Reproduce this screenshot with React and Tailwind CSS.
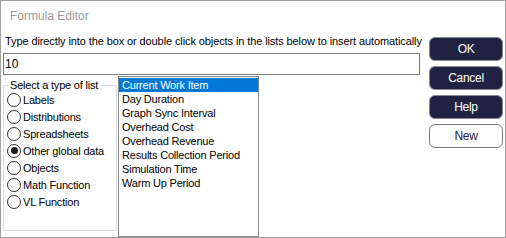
import React from "react";

const listTypes = [
    "Labels",
    "Distributions",
    "Spreadsheets",
    "Other global data",
    "Objects",
    "Math Function",
    "VL Function",
];

const items = [
    "Current Work Item",
    "Day Duration",
    "Graph Sync Interval",
    "Overhead Cost",
    "Overhead Revenue",
    "Results Collection Period",
    "Simulation Time",
    "Warm Up Period",
];

function Radio({ label, checked }) {
    return (
        <div className="flex items-center h-[17px]">
            <span className="w-[14px] h-[14px] rounded-full border border-[#333333] bg-white flex items-center justify-center">
                {checked && <span className="w-[7px] h-[7px] rounded-full bg-[#1a1a1a]" />}
            </span>
            <span className="ml-[2px] leading-[14px]">{label}</span>
        </div>
    );
}

export default function App() {
    return (
        <div
            className="w-[506px] h-[238px] bg-white border border-[#a0a0a0] overflow-hidden text-[11px] tracking-[-0.2px] text-black"
            style={{ fontFamily: '"Liberation Sans", Arial, sans-serif' }}
        >
            {/* Title */}
            <div className="pt-[8px] pl-[9px] text-[12px] tracking-normal leading-[14px] text-[#999999]">
                Formula Editor
            </div>

            <div className="flex mt-[11px] pl-[2px]">
                {/* Left column */}
                <div className="w-[420px] overflow-hidden">
                    <div className="pl-[2px] leading-[14px] whitespace-nowrap tracking-[-0.1px]">
                        Type directly into the box or double click objects in the lists below to insert automatically
                    </div>
                    <div className="mt-[5px] w-[417px] h-[22px] border border-[#7a7a7a] flex items-center pl-[1px] text-[12px] tracking-normal">
                        10
                    </div>

                    <div className="flex mt-[1px]">
                        <fieldset className="mt-[2px] w-[114px] h-[153px] border border-[#dcdcdc] pl-[3px]">
                            <legend className="ml-[1px] px-[2px] leading-[14px]">Select a type of list</legend>
                            <div className="-mt-[1px]">
                                {listTypes.map((t) => (
                                    <Radio key={t} label={t} checked={t === "Other global data"} />
                                ))}
                            </div>
                        </fieldset>

                        <div className="ml-[1px] w-[141px] h-[161px] border border-[#828790] pt-[1px]">
                            {items.map((it, i) => (
                                <div
                                    key={it}
                                    className={`h-[14px] leading-[14px] pl-[3px] whitespace-nowrap ${i === 0 ? "bg-[#0078d7] text-white" : ""}`}
                                >
                                    {it}
                                </div>
                            ))}
                        </div>
                    </div>
                </div>

                {/* Buttons */}
                <div className="ml-[6px] pt-[3px] flex flex-col gap-[5px] w-[74px]">
                    <button className="h-[24px] rounded-[6px] bg-[#1f2241] border border-[#8a8a96] text-white text-[12px] tracking-[-0.3px]">
                        OK
                    </button>
                    <button className="h-[24px] rounded-[6px] bg-[#1f2241] border border-[#8a8a96] text-white text-[12px] tracking-[-0.3px]">
                        Cancel
                    </button>
                    <button className="h-[24px] rounded-[6px] bg-[#1f2241] border border-[#8a8a96] text-white text-[12px] tracking-[-0.3px]">
                        Help
                    </button>
                    <button className="h-[24px] rounded-[6px] bg-white border-[1.5px] border-[#7a7a7a] text-[#1f2241] text-[12px] tracking-[-0.3px]">
                        New
                    </button>
                </div>
            </div>
        </div>
    );
}
